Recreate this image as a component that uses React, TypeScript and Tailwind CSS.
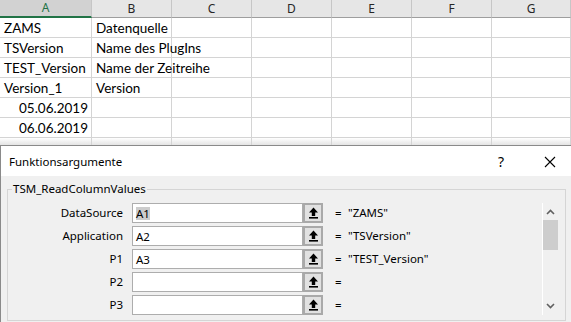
import React from "react";

const cols = [
  { name: "A", w: 92 },
  { name: "B", w: 80 },
  { name: "C", w: 80 },
  { name: "D", w: 80 },
  { name: "E", w: 80 },
  { name: "F", w: 80 },
  { name: "G", w: 79 },
];

const rows: { a: string; b: string; right?: boolean }[] = [
  { a: "ZAMS", b: "Datenquelle" },
  { a: "TSVersion", b: "Name des PlugIns" },
  { a: "TEST_Version", b: "Name der Zeitreihe" },
  { a: "Version_1", b: "Version" },
  { a: "05.06.2019", b: "", right: true },
  { a: "06.06.2019", b: "", right: true },
];

const args = [
  { label: "DataSource", ref: "A1", value: '"ZAMS"', selected: true },
  { label: "Application", ref: "A2", value: '"TSVersion"' },
  { label: "P1", ref: "A3", value: '"TEST_Version"' },
  { label: "P2", ref: "", value: "" },
  { label: "P3", ref: "", value: "" },
];

const RefIcon = () => (
  <svg width="11" height="12" viewBox="0 0 11 12">
    <path d="M5.5 0.5 L1 5.5 H3.8 V9 H7.2 V5.5 H10 Z" fill="#000" />
    <rect x="1" y="10" width="9" height="1.6" fill="#000" />
  </svg>
);

const Sheet = () => (
  <div className="h-[145px] overflow-hidden bg-white font-['Lato',sans-serif] text-[13.5px] text-black">
    <div className="flex h-[18px] bg-[#e6e6e6]">
      {cols.map((c, i) => (
        <div
          key={c.name}
          style={{ width: c.w }}
          className={
            i === 0
              ? "flex shrink-0 items-center justify-center border-r border-b-2 border-r-[#c6c6c6] border-b-[#217346] bg-[#d2d2d2] text-[12px] leading-[14px] text-[#217346] font-['Noto_Sans',sans-serif]"
              : "flex shrink-0 items-center justify-center border-r border-b border-r-[#c6c6c6] border-b-[#9e9e9e] text-[12px] leading-[14px] text-[#262626] font-['Noto_Sans',sans-serif]"
          }
        >
          {c.name}
        </div>
      ))}
    </div>
    {rows.map((r, ri) => (
      <div key={ri} className="flex h-[20px]">
        {cols.map((c, i) => (
          <div
            key={c.name}
            style={{ width: c.w }}
            className={`flex shrink-0 items-center whitespace-nowrap border-r border-b border-[#d4d4d4] pt-[2px] ${
              i === 0 && r.right ? "justify-end pr-[3px]" : "pl-[4px]"
            }`}
          >
            {i === 0 ? r.a : i === 1 ? r.b : ""}
          </div>
        ))}
      </div>
    ))}
    <div className="flex h-[7px] bg-gradient-to-b from-white to-[#e4e4e4]">
      {cols.map((c) => (
        <div key={c.name} style={{ width: c.w }} className="shrink-0 border-r border-[#d4d4d4]" />
      ))}
    </div>
  </div>
);

const Dialog = () => (
  <div className="h-[177px] border-t border-l border-[#8a8a8a] bg-[#f0f0f0] font-['Noto_Sans',sans-serif] text-[11.5px] text-black">
    <div className="flex h-[30px] items-center bg-white pl-[8px] pt-[1px]">
      <span className="flex-1">Funktionsargumente</span>
      <span className="w-[20px] text-center text-[14px] mr-[33px]">?</span>
      <svg width="12" height="12" viewBox="0 0 12 12" className="mr-[15px]">
        <path d="M1 1 L11 11 M11 1 L1 11" stroke="#000" strokeWidth="1.1" />
      </svg>
    </div>
    <div className="pt-[13px] pl-[6px] pr-[5px]">
      <div className="relative h-[132px] border border-[#d5d5d5]">
        <span className="absolute -top-[9px] left-[4px] bg-[#f0f0f0] px-[1px] leading-[16px]">
          TSM_ReadColumnValues
        </span>
        <div className="flex pt-[13px]">
          <div className="flex flex-col gap-[3px]">
            {args.map((a) => (
              <div key={a.label} className="flex h-[20px] items-center">
                <div className="w-[124px] pr-[9px] text-right">{a.label}</div>
                <div className="flex h-[20px] w-[171px] items-center border border-[#adadad] bg-white pl-[3px]">
                  {a.ref && (
                    <span className={a.selected ? "bg-[#cccccc] leading-[13px]" : "leading-[13px]"}>
                      {a.ref}
                    </span>
                  )}
                </div>
                <div className="flex h-[20px] w-[20px] items-center justify-center border-2 border-[#a9a9a9] bg-[#e1e1e1]">
                  <RefIcon />
                </div>
                <span className="ml-[12px] w-[13px]">=</span>
                <span>{a.value}</span>
              </div>
            ))}
          </div>
          <div className="ml-auto mr-[7px] flex h-[112px] w-[16px] flex-col items-center border-l border-white">
            <svg width="9" height="6" viewBox="0 0 9 6" className="mt-[6px]">
              <path d="M1 5 L4.5 1.5 L8 5" stroke="#606060" strokeWidth="1.6" fill="none" />
            </svg>
            <div className="mt-[5px] h-[30px] w-full bg-[#cdcdcd]" />
            <svg width="9" height="6" viewBox="0 0 9 6" className="mt-auto mb-[6px]">
              <path d="M1 1 L4.5 4.5 L8 1" stroke="#606060" strokeWidth="1.6" fill="none" />
            </svg>
          </div>
        </div>
      </div>
    </div>
  </div>
);

export default function App() {
  return (
    <div className="h-[322px] w-[571px] overflow-hidden bg-white">
      <Sheet />
      <Dialog />
    </div>
  );
}
